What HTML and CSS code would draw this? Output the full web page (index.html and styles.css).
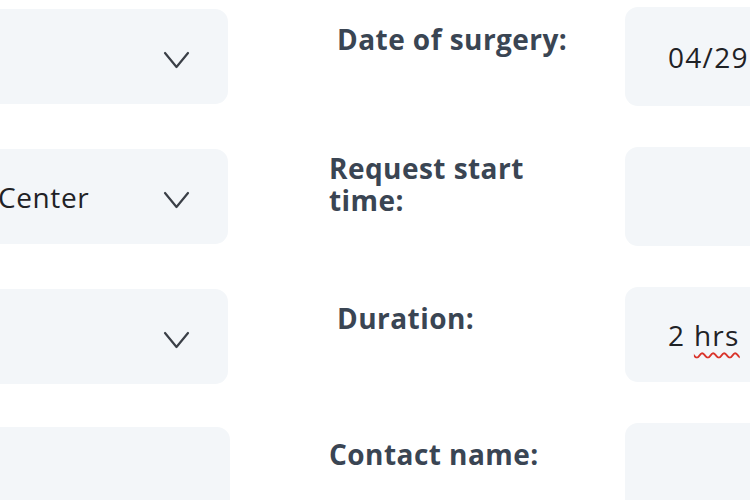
FILE: index.html
```html
<!DOCTYPE html>
<html lang="en">
<head>
<meta charset="utf-8">
<title>Surgery request</title>
<link rel="stylesheet" href="styles.css">
</head>
<body>
<div class="form">
  <div class="row">
    <div class="select-box"><span class="select-text"></span>
      <svg class="chevron" width="27" height="18" viewBox="0 0 27 18"><path d="M2 2 L13.5 16 L25 2" fill="none" stroke="#3a3f47" stroke-width="2.2" stroke-linecap="round" stroke-linejoin="round"/></svg>
    </div>
    <div class="label label-indent label-date">Date of surgery:</div>
    <div class="value-box"><span class="value-text">04/29</span></div>
  </div>
  <div class="row">
    <div class="select-box"><span class="select-text">Center</span>
      <svg class="chevron" width="27" height="18" viewBox="0 0 27 18"><path d="M2 2 L13.5 16 L25 2" fill="none" stroke="#3a3f47" stroke-width="2.2" stroke-linecap="round" stroke-linejoin="round"/></svg>
    </div>
    <div class="label label-request">Request start time:</div>
    <div class="value-box"><span class="value-text"></span></div>
  </div>
  <div class="row">
    <div class="select-box"><span class="select-text"></span>
      <svg class="chevron" width="27" height="18" viewBox="0 0 27 18"><path d="M2 2 L13.5 16 L25 2" fill="none" stroke="#3a3f47" stroke-width="2.2" stroke-linecap="round" stroke-linejoin="round"/></svg>
    </div>
    <div class="label label-indent label-duration">Duration:</div>
    <div class="value-box"><span class="value-text">2 <span class="misspelled">hrs</span></span></div>
  </div>
  <div class="row row-last">
    <div class="select-box text-box"></div>
    <div class="label label-contact">Contact name:</div>
    <div class="value-box"></div>
  </div>
</div>
</body>
</html>
```
FILE: styles.css
```css
html, body {
  margin: 0;
  padding: 0;
  background: #ffffff;
  overflow: hidden;
  width: 750px;
  height: 500px;
}

.form {
  display: flex;
  flex-direction: column;
  row-gap: 41px;
  margin-left: -20px;
  padding-top: 7px;
  width: 1000px;
}

.row {
  display: flex;
  align-items: flex-start;
  height: 99px;
}

.row-last {
  margin-top: -4px;
}

.select-box {
  box-sizing: border-box;
  width: 248px;
  height: 95px;
  margin-top: 2px;
  background: #f3f6f9;
  border-radius: 0 13px 13px 0;
  display: flex;
  align-items: center;
  justify-content: space-between;
  padding: 7px 38px 0 18px;
  flex-shrink: 0;
}

.row-last .select-box {
  margin-top: 4px;
  width: 250px;
  height: 120px;
}

.row-last .label {
  margin-left: 99px;
}

.select-text {
  font-family: "Open Sans", "DejaVu Sans", sans-serif;
  font-size: 28px;
  color: #1f2226;
  letter-spacing: 0.6px;
  white-space: nowrap;
  margin-top: -7px;
}

.chevron {
  display: block;
}

.label {
  box-sizing: border-box;
  width: 240px;
  margin-left: 101px;
  font-family: "Open Sans", "DejaVu Sans", sans-serif;
  font-weight: 700;
  font-size: 28px;
  line-height: 32px;
  letter-spacing: 0.45px;
  color: #3a4553;
  flex-shrink: 0;
}

.label-indent {
  padding-left: 8px;
}

.label-date { padding-top: 16px; }
.label-request { padding-top: 5px; }
.label-duration { padding-top: 15px; }
.label-contact { padding-top: 15px; }

.value-box {
  box-sizing: border-box;
  width: 220px;
  height: 99px;
  margin-left: 56px;
  background: #f3f6f9;
  border-radius: 13px 0 0 13px;
  display: flex;
  align-items: center;
  padding-left: 43px;
  flex-shrink: 0;
}

.row:nth-child(3) .value-box {
  height: 95px;
}

.row-last .value-box {
  height: 120px;
}

.value-text {
  font-family: "Open Sans", "DejaVu Sans", sans-serif;
  font-size: 28px;
  color: #1f2226;
  letter-spacing: 1.3px;
  white-space: nowrap;
}

.misspelled {
  text-decoration: underline wavy #d9342b;
  text-decoration-thickness: 1.5px;
  text-underline-offset: 6px;
}
```
